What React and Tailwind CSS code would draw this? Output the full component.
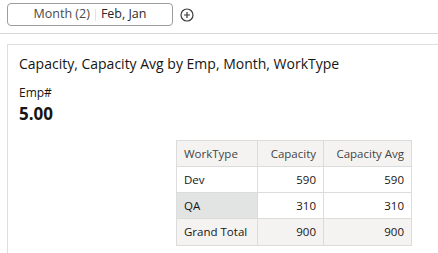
import React from 'react';

const rows = [
  { type: 'Dev', cap: '590', avg: '590' },
  { type: 'QA', cap: '310', avg: '310', hl: true },
];

export default function App() {
  const font = { fontFamily: '"Open Sans", "Noto Sans", sans-serif' };
  const cell = 'border border-[#dcdcdc] px-[7px] h-[26px] text-[11.5px]';

  return (
    <div className="w-[438px] h-[253px] overflow-hidden bg-white text-[#161513]" style={font}>
      <div className="h-[34px] border-b border-[#d6d6d6] flex items-start pt-[3px] pl-[7px]">
        <div className="w-[166px] h-[23px] border border-[#9e9e9e] rounded-[4px] flex items-center justify-center text-[12.5px]">
          <span className="text-[#4a4a4a]">Month (2)</span>
          <span className="mx-[5px] w-px h-[12px] bg-[#e3e3e3]"></span>
          <span className="text-[#2a2a2a]">Feb, Jan</span>
        </div>
        <svg className="ml-[7px] mt-[5px]" width="14" height="14" viewBox="0 0 14 14" fill="none" stroke="#3b3b3b" strokeWidth="1.2">
          <circle cx="7" cy="7" r="6" />
          <path d="M7 4v6M4 7h6" />
        </svg>
      </div>
      <div className="pt-[10px] pl-[7px]">
        <div className="border-l border-t border-[#dedede] pl-[11px] pt-[9px] h-[220px]">
          <div className="text-[14px] leading-[20px]">Capacity, Capacity Avg by Emp, Month, WorkType</div>
          <div className="mt-[11px] text-[12px] leading-[16px]">Emp#</div>
          <div className="mt-[2px] text-[17px] font-bold leading-[22px]">5.00</div>
          <div className="mt-[15px] ml-[157px]">
            <table className="border-collapse">
              <thead>
                <tr className="bg-[#f4f3f2]">
                  <th className={`${cell} w-[81px] h-[25px] font-normal text-left text-[#444]`}>WorkType</th>
                  <th className={`${cell} w-[66px] h-[25px] font-normal text-right text-[#444]`}>Capacity</th>
                  <th className={`${cell} w-[88px] h-[25px] font-normal text-right text-[#444]`}>Capacity Avg</th>
                </tr>
              </thead>
              <tbody>
                {rows.map((r) => (
                  <tr key={r.type}>
                    <td className={`${cell} ${r.hl ? 'bg-[#e2e3e3]' : 'bg-white'}`}>{r.type}</td>
                    <td className={`${cell} text-right`}>{r.cap}</td>
                    <td className={`${cell} text-right`}>{r.avg}</td>
                  </tr>
                ))}
                <tr className="bg-[#f4f3f2]">
                  <td className={`${cell} h-[27px]`}>Grand Total</td>
                  <td className={`${cell} h-[27px] text-right`}>900</td>
                  <td className={`${cell} h-[27px] text-right`}>900</td>
                </tr>
              </tbody>
            </table>
          </div>
        </div>
      </div>
    </div>
  );
}
